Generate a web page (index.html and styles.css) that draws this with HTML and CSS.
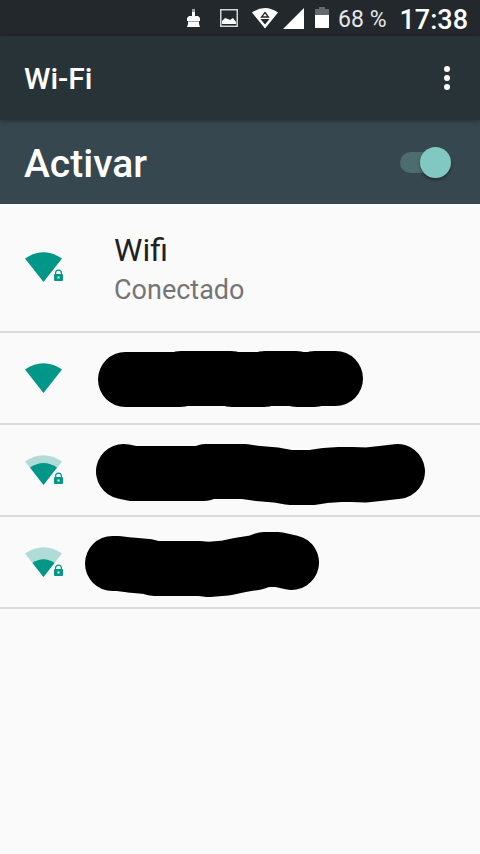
FILE: index.html
```html
<!DOCTYPE html>
<html lang="es">
<head>
<meta charset="utf-8">
<meta name="viewport" content="width=device-width, initial-scale=1">
<title>Wi-Fi</title>
<link rel="stylesheet" href="styles.css">
</head>
<body>
<div class="status-bar">
  <svg class="status-clean" width="14" height="20" viewBox="0 0 14 20" aria-hidden="true">
    <path fill="#9da0a2" d="M6 1h3v4H6z"/>
    <path fill="#fff" d="M6 4h3v4h3l2 2v3H1v-3l2-2h3zM2 14h11v2l1 3H1l1-3z"/>
    <path fill="#a5a8aa" d="M2 13h11v1H2z"/>
  </svg>
  <svg class="status-image" width="20" height="20" viewBox="0 0 20 20" aria-hidden="true">
    <path fill="none" stroke="#d3d4d5" stroke-width="1.500" d="M1.750 1.750h16.500v16.500H1.750z"/>
    <path fill="#fff" d="M3 16v-3l3-3 3 1 2 1 3-2 3 4v2z"/>
  </svg>
  <svg class="status-wifi" width="28" height="22" viewBox="0 0 28 22" aria-hidden="true">
    <path fill="#fff" d="M1 5.500Q14-3.500 27 5.500L14 21.500z"/>
    <path fill="none" stroke="#22282c" stroke-width="1.300" d="M14 5.500l3.500 4.500h-7z"/>
    <path fill="#22282c" d="M9.500 12h9L14 17.500z"/>
  </svg>
  <svg class="status-signal" width="21" height="21" viewBox="0 0 21 21" aria-hidden="true">
    <path fill="#fff" d="M21 0v21H0z"/>
  </svg>
  <svg class="status-battery" width="14" height="22" viewBox="0 0 14 22" aria-hidden="true">
    <path fill="#64696b" d="M4 0h6v2h4v6H0V2h4z"/>
    <path fill="#fff" d="M0 8h14v13H0z"/>
  </svg>
  <span class="battery-level">68 %</span>
  <time class="clock">17:38</time>
</div>

<header class="app-bar">
  <h1 class="app-title">Wi-Fi</h1>
  <button class="menu-button" type="button" aria-label="Más opciones">
    <svg width="6" height="24" viewBox="0 0 6 24" aria-hidden="true">
      <circle cx="3" cy="3" r="3"/><circle cx="3" cy="12" r="3"/><circle cx="3" cy="21" r="3"/>
    </svg>
  </button>
</header>

<main>
  <div class="switch-bar">
    <label class="switch-label" for="wifi-switch">Activar</label>
    <input class="switch" id="wifi-switch" type="checkbox" role="switch" checked>
  </div>

  <ul class="networks">
    <li class="network network-connected">
      <svg class="signal" viewBox="0 0 40 30" aria-hidden="true">
        <path class="signal-on" d="M1 6.500Q19.500-6 38 6.500L19.500 30z"/>
        <path class="lock" d="M31 22v-1a3.500 3.500 0 0 1 7 0v1q1 0 1 1v5q0 1-1 1h-7q-1 0-1-1v-5q0-1 1-1zM32.200 22h4.600v-1a2.300 2.300 0 0 0-4.600 0zM33.500 24.500v2h2v-2z"/>
      </svg>
      <div class="network-text">
        <span class="network-name">Wifi</span>
        <span class="network-state">Conectado</span>
      </div>
    </li>
    <li class="network">
      <svg class="signal" viewBox="0 0 40 30" aria-hidden="true">
        <path class="signal-on" d="M1 6.500Q19.500-6 38 6.500L19.500 30z"/>
      </svg>
      <svg class="hidden-name" viewBox="64 0 376 90" aria-hidden="true">
        <path d="M125.500 46.500H180L181 45.500H231L232 46.500H264L265 45.500H296L297 46.500H314L315 45.500H335.500"/>
      </svg>
    </li>
    <li class="network">
      <svg class="signal" viewBox="0 0 40 30" aria-hidden="true">
        <path class="signal-off" d="M1 6.500Q19.500-6 38 6.500L19.500 30z"/>
        <path class="signal-on" d="M6 12.500Q19.500 3.500 33 12.500L19.500 30z"/>
        <path class="lock" d="M31 22v-1a3.500 3.500 0 0 1 7 0v1q1 0 1 1v5q0 1-1 1h-7q-1 0-1-1v-5q0-1 1-1zM32.200 22h4.600v-1a2.300 2.300 0 0 0-4.600 0zM33.500 24.500v2h2v-2z"/>
      </svg>
      <svg class="hidden-name" viewBox="64 0 376 90" aria-hidden="true">
        <path d="M123.500 46.500L133 48.500H203L206 46.500H244L258 48.500L276 50L290 52.500H312L325 50.500L340 49.500H352L366 50L380 48.500L397.500 46.500"/>
      </svg>
    </li>
    <li class="network">
      <svg class="signal" viewBox="0 0 40 30" aria-hidden="true">
        <path class="signal-off" d="M1 6.500Q19.500-6 38 6.500L19.500 30z"/>
        <path class="signal-on" d="M8.500 16Q19.500 8.500 30.500 16L19.500 30z"/>
        <path class="lock" d="M31 22v-1a3.500 3.500 0 0 1 7 0v1q1 0 1 1v5q0 1-1 1h-7q-1 0-1-1v-5q0-1 1-1zM32.200 22h4.600v-1a2.300 2.300 0 0 0-4.600 0zM33.500 24.500v2h2v-2z"/>
      </svg>
      <svg class="hidden-name" viewBox="64 0 376 90" aria-hidden="true">
        <path d="M112.500 46.500H118L130 48L147 49.500L155 51.500H200L208 52.500L226 51L240 48L256 45.500L264 42.500H278L291.500 45.500"/>
      </svg>
    </li>
  </ul>
</main>
</body>
</html>
```
FILE: styles.css
```css
* {
  box-sizing: border-box;
}

body {
  margin: 0;
  min-height: 100vh;
  background: #fafafa;
  color: #212121;
  font-family: Roboto, "Liberation Sans", sans-serif;
}

svg {
  display: block;
  flex: none;
}

.status-bar {
  display: flex;
  align-items: center;
  justify-content: flex-end;
  height: 36px;
  padding-right: 12px;
  background: #22282c;
  color: #fff;
}

.status-image {
  margin-left: 19px;
}

.status-wifi {
  margin-left: 12px;
}

.status-signal {
  margin-left: 4px;
}

.status-battery {
  margin-left: 11px;
}

.battery-level {
  padding-top: 4px;
  margin-left: 9px;
  font-size: 23px;
  line-height: 32px;
  color: #e6e7e8;
}

.clock {
  padding-top: 4px;
  margin-left: 13px;
  font-size: 27px;
  font-weight: 500;
  line-height: 32px;
}

.app-bar {
  position: relative;
  display: flex;
  align-items: center;
  justify-content: space-between;
  height: 84px;
  padding: 0 18px 0 24px;
  background: #283338;
  box-shadow: 0 1px 5px rgba(0, 0, 0, 0.35);
  color: #fff;
}

.app-title {
  margin: 0;
  padding-top: 2px;
  font-size: 30px;
  font-weight: 500;
  line-height: 40px;
}

.menu-button {
  display: flex;
  align-items: center;
  justify-content: center;
  width: 30px;
  height: 48px;
  padding: 0;
  border: 0;
  background: none;
  fill: #fff;
}

.switch-bar {
  display: flex;
  align-items: center;
  justify-content: space-between;
  height: 84px;
  padding: 0 29px 0 24px;
  background: #37474f;
  color: #fff;
}

.switch-label {
  padding-top: 4px;
  font-size: 39px;
  font-weight: 500;
  line-height: 48px;
}

.switch {
  display: flex;
  align-items: center;
  appearance: none;
  width: 51px;
  height: 31px;
  margin: 0;
}

.switch::before {
  content: "";
  width: 44px;
  height: 21px;
  border-radius: 11px;
  background: #4d6c6e;
}

.switch::after {
  content: "";
  width: 31px;
  height: 31px;
  margin-left: -24px;
  border-radius: 50%;
  background: #80c8c1;
  box-shadow: 0 2px 3px rgba(0, 0, 0, 0.35);
}

.networks {
  margin: 0;
  padding: 0;
  list-style: none;
}

.network {
  display: flex;
  align-items: center;
  height: 92px;
  padding: 0 24px;
  border-bottom: 2px solid #dadada;
}

.network-connected {
  height: 129px;
  padding-bottom: 1px;
}

.signal {
  width: 40px;
  height: 30px;
}

.signal-on,
.lock {
  fill: #009688;
}

.lock {
  fill-rule: evenodd;
}

.signal-off {
  fill: #b0dcd7;
}

.network-text {
  display: flex;
  flex-direction: column;
  margin-left: 50px;
  padding-top: 6px;
}

.network-name {
  font-size: 32px;
  line-height: 40px;
}

.network-state {
  font-size: 27px;
  line-height: 40px;
  color: #757575;
}

.hidden-name {
  width: 376px;
  height: 90px;
  fill: none;
  stroke: #000;
  stroke-width: 55px;
  stroke-linecap: round;
  stroke-linejoin: round;
}
```
